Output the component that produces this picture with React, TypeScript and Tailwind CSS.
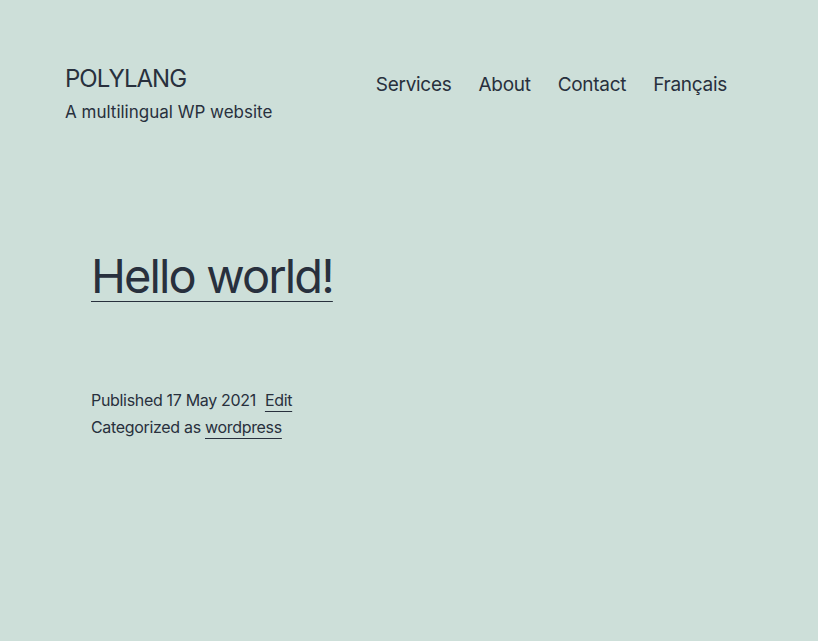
export default function App() {
  const nav = ["Services", "About", "Contact", "Français"];

  return (
    <div
      className="min-h-[641px] bg-[#cddfd9] text-[#28303d]"
      style={{ fontFamily: "Inter, 'Noto Sans', sans-serif" }}
    >
      {/* Site header */}
      <header className="flex items-start justify-between pl-[65px] pr-[91px] pt-[64px]">
        <div>
          <p className="text-[24px] leading-[30px] uppercase tracking-[-0.04em]">Polylang</p>
          <p className="mt-[6px] text-[17px] leading-[24px]">A multilingual WP website</p>
        </div>
        <nav className="flex gap-[27px] pt-[9px]">
          {nav.map((item) => (
            <a key={item} href="#" className="text-[19px] leading-[24px] tracking-[-0.015em]">
              {item}
            </a>
          ))}
        </nav>
      </header>

      {/* Post */}
      <main className="px-[91px] pt-[123px]">
        <h1 className="text-[47px] leading-[58px] font-normal tracking-[-0.04em]">
          <a href="#" className="underline decoration-1 underline-offset-[8px]">
            Hello world!
          </a>
        </h1>

        <div className="mt-[82px] text-[16px] leading-[27px] tracking-[-0.02em]">
          <p>
            Published 17 May 2021
            <a href="#" className="ml-[9px] underline underline-offset-[5px]">
              Edit
            </a>
          </p>
          <p>
            Categorized as{" "}
            <a href="#" className="underline underline-offset-[5px]">
              wordpress
            </a>
          </p>
        </div>
      </main>
    </div>
  );
}
